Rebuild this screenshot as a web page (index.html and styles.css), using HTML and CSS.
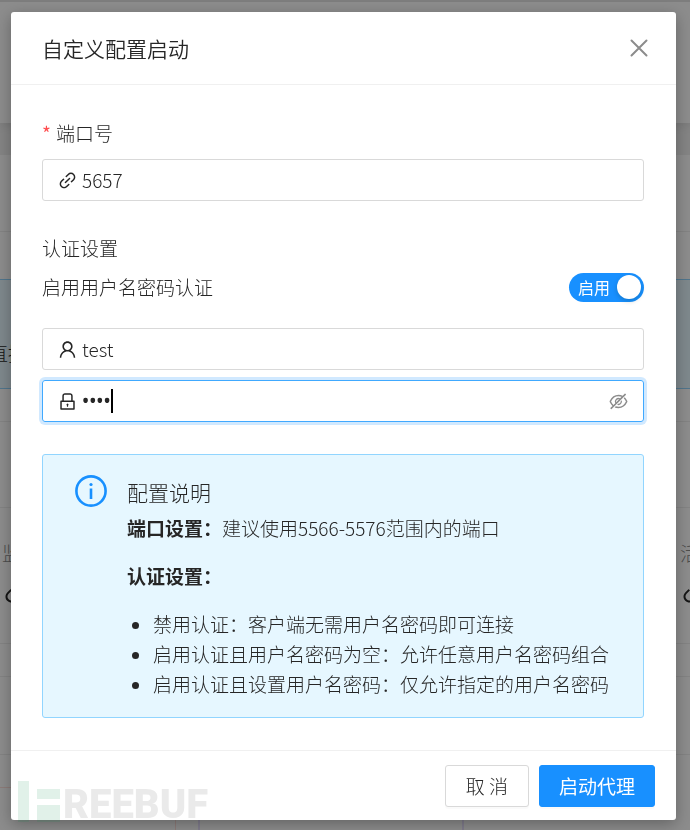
FILE: index.html
```html
<!DOCTYPE html>
<html lang="zh-CN">
<head>
    <meta charset="utf-8">
    <meta name="viewport" content="width=device-width, initial-scale=1">
    <title>自定义配置启动</title>
    <link rel="stylesheet" href="styles.css">
</head>
<body>
    <div class="page" aria-hidden="true">
        <div class="page-header"></div>
        <div class="page-card">
            <div class="card-title"></div>
            <div class="card-space"></div>
            <div class="card-alert"><span>直接</span></div>
            <div class="card-space small"></div>
            <div class="card-row"></div>
            <div class="card-stats">
                <div class="stat">
                    <span class="stat-label">监听</span>
                    <svg class="icon stat-icon" viewBox="0 0 1024 1024"><use href="#icon-link"/></svg>
                </div>
                <div class="stat right">
                    <span class="stat-label">活动</span>
                    <svg class="icon stat-icon" viewBox="0 0 1024 1024"><use href="#icon-link"/></svg>
                </div>
            </div>
            <div class="card-space small"></div>
            <div class="card-row tall"></div>
            <div class="card-space small"></div>
            <div class="card-columns"><div class="column pink"></div><div class="column purple"></div></div>
        </div>
    </div>

    <div class="mask">
        <div class="modal" role="dialog" aria-labelledby="modalTitle">
            <div class="modal-header">
                <h1 class="modal-title" id="modalTitle">自定义配置启动</h1>
                <button type="button" class="close-btn" aria-label="关闭">
                    <svg viewBox="0 0 18 18"><path d="M1.500 1.500L16.500 16.500M16.500 1.500L1.500 16.500"/></svg>
                </button>
            </div>

            <form class="modal-form" id="proxyForm">
                <div class="modal-body">
                    <label class="label required" for="port">端口号</label>
                    <div class="input-box port-box">
                        <svg class="icon" viewBox="0 0 1024 1024"><path id="icon-link" d="M574 665.4a8.03 8.03 0 00-11.3 0L446.5 781.6c-53.8 53.8-144.6 59.5-204 0-59.5-59.5-53.8-150.2 0-204l116.2-116.2c3.1-3.1 3.1-8.2 0-11.3l-39.8-39.8a8.03 8.03 0 00-11.3 0L191.4 526.500c-84.6 84.6-84.6 221.500 0 306s221.500 84.6 306 0l116.2-116.2c3.1-3.1 3.1-8.2 0-11.3L574 665.4zm258.6-474c-84.6-84.6-221.500-84.6-306 0L410.3 307.6a8.03 8.03 0 000 11.3l39.7 39.7c3.1 3.1 8.2 3.1 11.3 0l116.2-116.2c53.8-53.8 144.6-59.5 204 0 59.5 59.5 53.8 150.2 0 204L665.3 562.6a8.03 8.03 0 000 11.3l39.8 39.8c3.1 3.1 8.2 3.1 11.3 0l116.2-116.2c84.5-84.6 84.5-221.5 0-306.1zM610.1 372.3a8.03 8.03 0 00-11.3 0L372.3 598.7a8.03 8.03 0 000 11.3l39.6 39.6c3.1 3.1 8.2 3.1 11.3 0l226.4-226.4c3.1-3.1 3.1-8.2 0-11.3l-39.5-39.6z"/></svg>
                        <input type="text" id="port" value="5657" inputmode="numeric" required>
                    </div>

                    <div class="label">认证设置</div>
                    <div class="switch-row">
                        <label for="authSwitch">启用用户名密码认证</label>
                        <span class="switch">
                            <input type="checkbox" role="switch" id="authSwitch" checked>
                            <span class="switch-text">启用</span>
                            <span class="switch-handle"></span>
                        </span>
                    </div>

                    <div class="input-box">
                        <svg class="icon" viewBox="0 0 1024 1024"><path d="M858.5 763.6a374 374 0 00-80.6-119.5 375.63 375.63 0 00-119.5-80.6c-.4-.2-.8-.3-1.2-.5C719.5 518 760 444.7 760 362c0-137-111-248-248-248S264 225 264 362c0 82.7 40.5 156 102.8 201.1-.4.2-.8.3-1.2.5-44.8 18.9-85 46-119.5 80.6a375.63 375.63 0 00-80.6 119.5A371.7 371.7 0 00136 901.8a8 8 0 008 8.2h60c4.4 0 7.9-3.5 8-7.8 2-77.2 33-149.5 87.8-204.3 56.7-56.7 132-87.9 212.2-87.9s155.5 31.2 212.2 87.9C779 752.7 810 825 812 902.2c.1 4.4 3.6 7.8 8 7.8h60a8 8 0 008-8.2c-1-47.8-10.9-94.3-29.5-138.2zM512 534c-45.9 0-89.1-17.9-121.6-50.4S340 407.9 340 362c0-45.9 17.9-89.1 50.4-121.6S466.1 190 512 190s89.1 17.9 121.6 50.4S684 316.1 684 362c0 45.9-17.9 89.1-50.4 121.6S557.9 534 512 534z"/></svg>
                        <input type="text" id="username" value="test" aria-label="用户名">
                    </div>
                    <div class="input-box focused">
                        <svg class="icon" viewBox="0 0 1024 1024"><path d="M832 464h-68V240c0-70.7-57.3-128-128-128H388c-70.7 0-128 57.3-128 128v224h-68c-17.7 0-32 14.3-32 32v384c0 17.7 14.3 32 32 32h640c17.7 0 32-14.3 32-32V496c0-17.7-14.3-32-32-32zM332 240c0-30.9 25.1-56 56-56h248c30.9 0 56 25.1 56 56v224H332V240zm460 600H232V536h560v304zM484 701v53c0 4.4 3.6 8 8 8h40c4.4 0 8-3.6 8-8v-53a48.01 48.01 0 10-56 0z"/></svg>
                        <span class="password-field">
                            <input type="password" id="password" value="test" aria-label="密码" autofocus>
                            <span class="caret"></span>
                        </span>
                        <button type="button" class="eye-btn" aria-label="显示密码">
                            <svg class="icon" viewBox="0 0 1024 1024"><path d="M942.2 486.2Q889.47 375.11 816.7 305l-50.88 50.88C807.31 395.53 843.45 447.4 874.7 512 791.5 684.2 673.4 766 512 766q-72.67 0-133.87-22.38L323 798.75Q408 838 512 838q288.3 0 430.2-300.3a60.29 60.29 0 000-51.5zm-63.57-320.64L836 122.88a8 8 0 00-11.32 0L715.31 232.2Q624.86 186 512 186q-288.3 0-430.2 300.3a60.3 60.3 0 000 51.5q56.69 119.4 136.5 191.41L112.48 835a8 8 0 000 11.31L155.17 889a8 8 0 0011.31 0l712.15-712.12a8 8 0 000-11.32zM149.3 512C232.6 339.8 350.7 258 512 258c54.54 0 104.13 9.36 149.12 28.39l-70.3 70.3a176 176 0 00-238.13 238.13l-83.42 83.42C223.1 637.49 183.3 582.28 149.3 512zm246.7 0a112.11 112.11 0 01146.2-106.69L401.31 546.2A112 112 0 01396 512z"/><path d="M508 624c-3.46 0-6.87-.16-10.25-.47l-52.82 52.82a176.09 176.09 0 00227.42-227.42l-52.82 52.82c.31 3.38.47 6.79.47 10.25a111.94 111.94 0 01-112 112z"/></svg>
                        </button>
                    </div>

                    <div class="alert">
                        <svg class="alert-icon" viewBox="0 0 32 32"><circle cx="16" cy="16" r="14.6"/><path d="M16 13.500v10.500"/><circle class="dot" cx="16" cy="9.500" r="1.600"/></svg>
                        <div class="alert-content">
                            <h2 class="alert-title">配置说明</h2>
                            <p><strong>端口设置：</strong>建议使用5566-5576范围内的端口</p>
                            <p><strong>认证设置：</strong></p>
                            <ul>
                                <li>禁用认证：客户端无需用户名密码即可连接</li>
                                <li>启用认证且用户名密码为空：允许任意用户名密码组合</li>
                                <li>启用认证且设置用户名密码：仅允许指定的用户名密码</li>
                            </ul>
                        </div>
                    </div>
                </div>

                <div class="modal-footer">
                    <button type="button" class="btn">取 消</button>
                    <button type="submit" class="btn primary">启动代理</button>
                </div>
            </form>
        </div>
    </div>

    <div class="watermark">
        <svg viewBox="0 0 42 41"><path d="M0 0h11v41H0zM19 8h23v10H19zM19 24h23v17H19z"/></svg>
        <span>REEBUF</span>
    </div>

    <script>
        document.getElementById('password').focus();
        document.getElementById('proxyForm').addEventListener('submit', function(event) {
            event.preventDefault();
        });
    </script>
</body>
</html>
```
FILE: styles.css
```css
* {
    box-sizing: border-box;
}
body {
    margin: 0;
    height: 100vh;
    overflow: hidden;
    background-color: #f0f0f0;
    color: #262626;
    font-family: "Noto Sans CJK SC", "Noto Sans", sans-serif;
    font-size: 19px;
    font-weight: 300;
    line-height: 30px;
}
h1, h2, p, ul {
    margin: 0;
    padding: 0;
    font-weight: 300;
}
button, input {
    font: inherit;
    color: inherit;
}
.icon {
    width: 21px;
    height: 21px;
    flex: none;
    fill: currentColor;
}

/* page behind the dialog */
.page-header {
    height: 123px;
    margin-bottom: 32px;
    background-color: #fff;
    border-top: 2px solid #e4e4e4;
    box-shadow: 0 2px 10px rgba(0, 0, 0, 0.1);
}
.page-card {
    background-color: #fff;
}
.card-title {
    height: 77px;
    border-bottom: 1px solid #eee;
}
.card-space {
    height: 47px;
}
.card-space.small {
    height: 32px;
}
.card-alert {
    height: 110px;
    padding: 58px 0 0;
    background-color: #e6f7ff;
    border: 1px solid #91d5ff;
    border-width: 1px 0;
}
.card-alert span {
    margin-left: -11px;
}
.card-row {
    height: 87px;
    border: 1px solid #eee;
    border-width: 1px 0;
}
.card-row.tall {
    height: 79px;
}
.card-stats {
    display: flex;
    justify-content: space-between;
    height: 136px;
    padding-top: 30px;
    border-bottom: 1px solid #eee;
}
.stat {
    display: flex;
    flex-direction: column;
    gap: 10px;
    width: 40px;
    padding-left: 2px;
}
.stat.right {
    width: 10px;
    padding: 0;
}
.stat-label {
    color: #8c8c8c;
    white-space: nowrap;
}
.stat-icon {
    width: 28px;
    height: 28px;
}
.card-columns {
    display: flex;
    gap: 22px;
    height: 60px;
}
.column {
    width: 266px;
    border: 2px solid #e9e2ff;
}
.column.pink {
    width: 176px;
    border: 1px solid #ffe1dc;
    border-left: none;
}

/* dialog */
.mask {
    position: fixed;
    inset: 0;
    padding: 12px 14px 10px 11px;
    background-color: rgba(0, 0, 0, 0.45);
}
.modal {
    background-color: #fff;
    border-radius: 3px;
    box-shadow: 0 4px 16px rgba(0, 0, 0, 0.3);
}
.modal-header {
    display: flex;
    align-items: center;
    justify-content: space-between;
    padding: 21px 28px 21px 31px;
    border-bottom: 1px solid #f0f0f0;
}
.modal-title {
    font-size: 21px;
    font-weight: 350;
    line-height: 30px;
}
.close-btn {
    display: flex;
    padding: 0;
    border: none;
    background: none;
    color: #8c8c8c;
    cursor: pointer;
}
.close-btn svg {
    width: 18px;
    height: 18px;
    fill: none;
    stroke: currentColor;
    stroke-width: 2;
    stroke-linecap: round;
}
.modal-body {
    padding: 32px 32px 32px 31px;
}
.label {
    display: block;
    line-height: 32px;
}
.required::before {
    content: "*";
    margin-right: 5px;
    color: #ff4d4f;
    font-weight: 400;
}
.input-box {
    display: flex;
    align-items: center;
    gap: 4px;
    height: 42px;
    padding: 0 14px;
    border: 1px solid #d9d9d9;
    border-radius: 3px;
}
.input-box + .input-box {
    margin-top: 10px;
}
.port-box {
    margin: 10px 0 31px;
}
.input-box input {
    flex: 1;
    min-width: 0;
    padding: 0;
    border: none;
    outline: none;
    background: none;
}
.input-box.focused {
    border-color: #40a9ff;
    box-shadow: 0 0 0 3px rgba(24, 144, 255, 0.2);
}
.password-field {
    position: relative;
    display: flex;
    flex: 1;
}
.password-field input {
    font-family: "Noto Sans", sans-serif;
    font-weight: 500;
    caret-color: transparent;
}
.caret {
    position: absolute;
    top: 3px;
    left: 29px;
    width: 2px;
    height: 24px;
    background-color: #000;
}
.eye-btn {
    display: flex;
    padding: 0;
    border: none;
    background: none;
    color: #8c8c8c;
    cursor: pointer;
}
.switch-row {
    display: flex;
    align-items: center;
    justify-content: space-between;
    margin: 8px 0 26px;
}
.switch {
    position: relative;
    display: flex;
    align-items: center;
    justify-content: space-between;
    width: 75px;
    height: 29px;
    padding: 0 3px 0 9px;
    border-radius: 15px;
    background-color: #1890ff;
    color: #fff;
}
.switch input {
    position: absolute;
    inset: 0;
    width: 100%;
    height: 100%;
    margin: 0;
    opacity: 0;
    cursor: pointer;
}
.switch-text {
    font-size: 16px;
    font-weight: 400;
}
.switch-handle {
    width: 24px;
    height: 24px;
    border-radius: 50%;
    background-color: #fff;
    box-shadow: 0 2px 5px rgba(0, 35, 11, 0.2);
}
.alert {
    display: flex;
    gap: 20px;
    margin-top: 32px;
    padding: 20px 20px 18px 32px;
    border: 1px solid #91d5ff;
    border-radius: 3px;
    background-color: #e6f7ff;
}
.alert-icon {
    width: 32px;
    height: 32px;
    flex: none;
    fill: none;
    stroke: #1890ff;
    stroke-width: 2.6;
}
.alert-icon .dot {
    fill: #1890ff;
    stroke: none;
}
.alert-title {
    margin: 1px 0 5px;
    font-size: 21px;
    line-height: 32px;
}
.alert p {
    margin-bottom: 18px;
}
.alert strong {
    font-weight: 700;
}
.alert ul {
    padding-left: 26px;
}
.modal-footer {
    display: flex;
    justify-content: flex-end;
    gap: 10px;
    padding: 14px 21px 13px;
    border-top: 1px solid #f0f0f0;
}
.btn {
    height: 42px;
    padding: 0 20px;
    border: 1px solid #d9d9d9;
    border-radius: 3px;
    background-color: #fff;
    box-shadow: 0 2px 0 rgba(0, 0, 0, 0.02);
    cursor: pointer;
}
.btn.primary {
    padding: 0 19px;
    border-color: #1890ff;
    background-color: #1890ff;
    color: #fff;
    font-weight: 400;
}

/* site mark over the corner */
.watermark {
    position: fixed;
    left: 18px;
    bottom: 8px;
    display: flex;
    align-items: flex-end;
    gap: 3px;
    opacity: 0.12;
    color: #555;
    font-family: Roboto, sans-serif;
    font-size: 40px;
    font-weight: 900;
    line-height: 34px;
    pointer-events: none;
}
.watermark svg {
    width: 42px;
    height: 41px;
    fill: #0a8a4a;
}
```
